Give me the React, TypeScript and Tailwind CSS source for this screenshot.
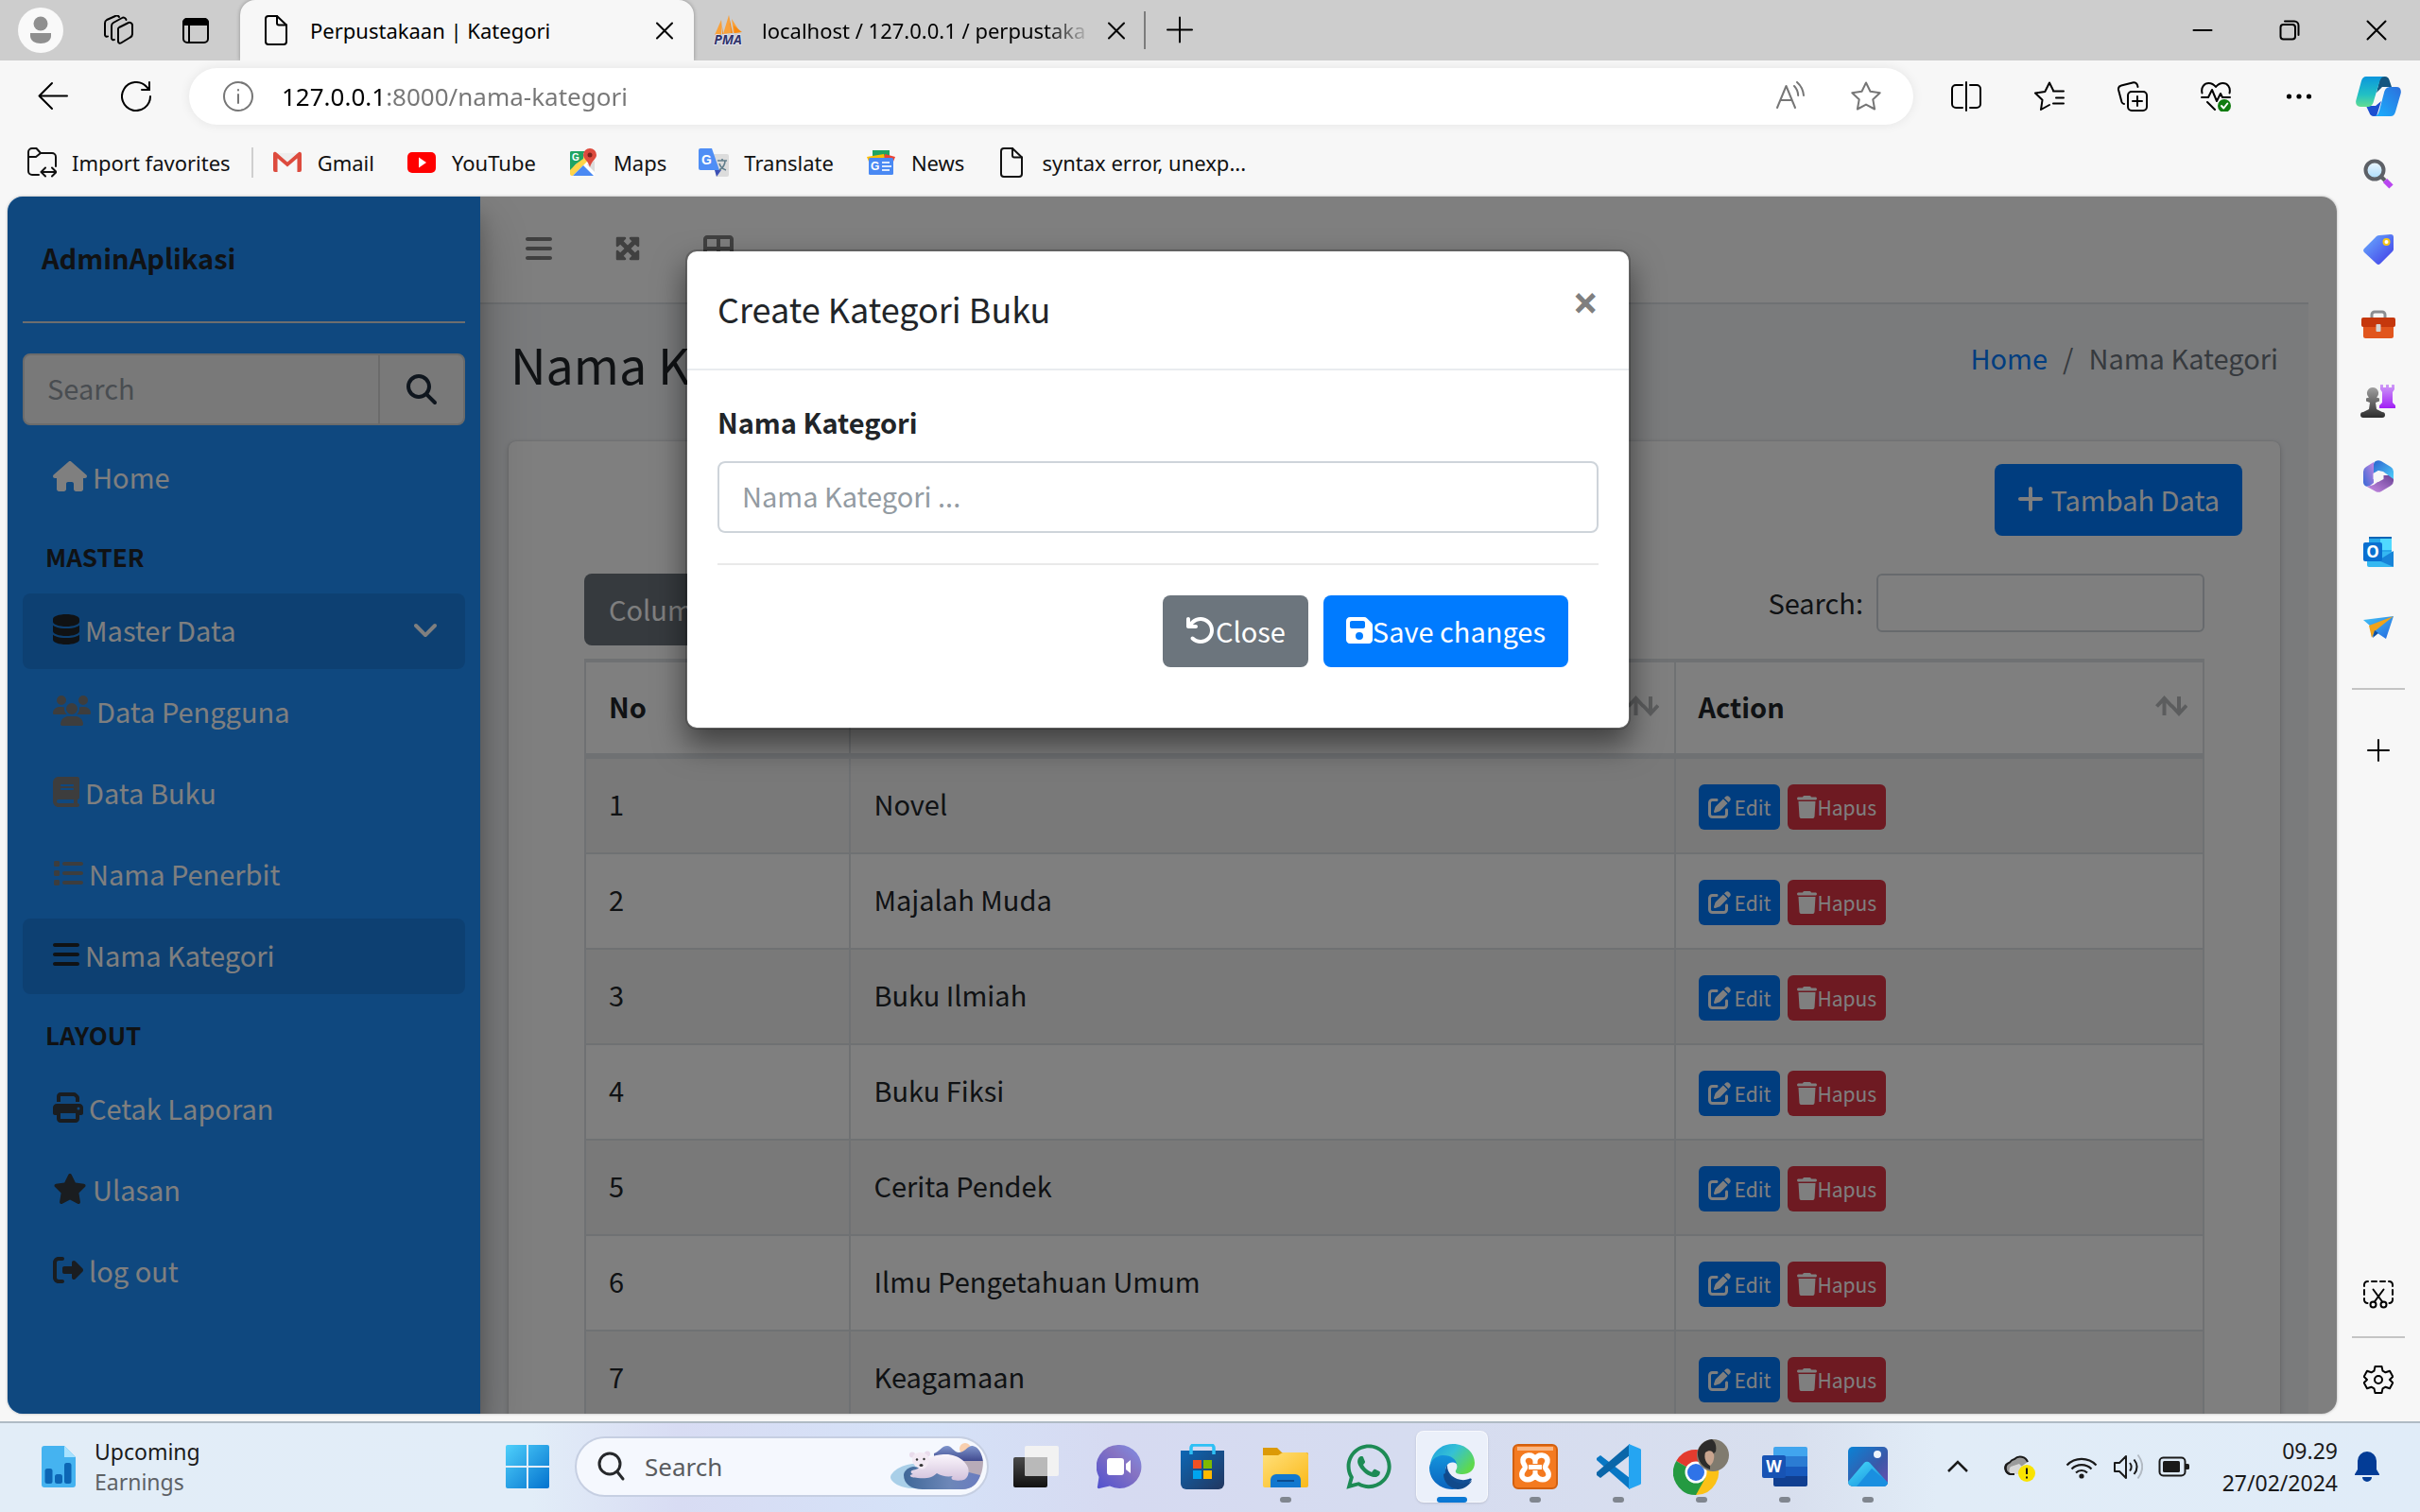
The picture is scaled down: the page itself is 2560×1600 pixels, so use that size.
import type { ReactNode } from "react";
import {
  FaHouse, FaDatabase, FaUsers, FaBook, FaList, FaBars, FaPrint, FaStar, FaRightFromBracket,
  FaAngleDown, FaMaximize, FaTableCellsLarge, FaPenToSquare, FaTrash, FaArrowRotateLeft,
  FaFloppyDisk, FaPlus, FaMagnifyingGlass, FaWhatsapp,
} from "react-icons/fa6";

type P = { children?: ReactNode };

/* ---------- line icons of the browser chrome (32 x 32 grid) ---------- */

function Line({ children }: P) {
  return (
    <svg viewBox="0 0 32 32" className="size-8 shrink-0" fill="none" stroke="currentColor" strokeWidth="2" strokeLinecap="round" strokeLinejoin="round" aria-hidden="true">
      {children}
    </svg>
  );
}

const FileIcon = () => (
  <Line>
    <path d="M8 1h9l10 9.500v17.500a3 3 0 0 1-3 3H8a3 3 0 0 1-3-3V4a3 3 0 0 1 3-3z" />
    <path d="M17 1v7.500a2 2 0 0 0 2 2h8" />
  </Line>
);
const CrossIcon = () => (
  <Line><path d="M8 8.500l16 16M24 8.500l-16 16" /></Line>
);
const WorkspacesIcon = () => (
  <Line>
    <path d="M17 13l9-4.500a3 3 0 0 1 5 2.500v9a4 4 0 0 1-2.200 3.500L19 29.500a2 2 0 0 1-3-2V15a2 2 0 0 1 1-2z" />
    <path d="M12 26a2 2 0 0 1-3-2V11.500a4 4 0 0 1 2-3.500l9-5a3 3 0 0 1 4.500 2" />
    <path d="M5 22.500a2 2 0 0 1-3-2V8.500A4 4 0 0 1 4 5l9-4a3 3 0 0 1 4 1" />
  </Line>
);
const VerticalTabsIcon = () => (
  <Line>
    <rect x="3" y="4" width="26" height="25" rx="4" />
    <path d="M3 10V8a4 4 0 0 1 4-4h18a4 4 0 0 1 4 4v2z" fill="currentColor" />
    <path d="M9 10v19" />
  </Line>
);
const BackIcon = () => (
  <Line><path d="M31 15.500H1.500M15 2L1.500 15.500L15 29" /></Line>
);
const RefreshIcon = () => (
  <Line>
    <path d="M31 16a15 15 0 1 1-4-10.200L30 9" />
    <path d="M30 1v8h-8" />
  </Line>
);
const InfoIcon = () => (
  <Line>
    <circle cx="16" cy="16" r="15" />
    <path d="M16 14v9M16 9v.500" />
  </Line>
);
const ReadAloudIcon = () => (
  <Line>
    <path d="M2 28L11.500 5L21 28M5.500 20h12" />
    <path d="M20 5c2.500 2.500 4 6 4.200 10M23 1c4 3.500 6.500 8.500 7 14" />
  </Line>
);
const StarIcon = () => (
  <Line>
    <path d="M16 1.500l4.500 9.300 10.200 1.400-7.400 7.100 1.800 10.200L16 24.600l-9.100 4.900 1.800-10.200-7.400-7.100 10.200-1.400z" />
  </Line>
);
const SplitIcon = () => (
  <Line>
    <path d="M12 4H5a4 4 0 0 0-4 4v16a4 4 0 0 0 4 4h7M20 4h7a4 4 0 0 1 4 4v16a4 4 0 0 1-4 4h-7M16 1v30" />
  </Line>
);
const FavoritesIcon = () => (
  <Line>
    <path d="M16 25l-9 5 1.500-10.200L1 12.500l10.300-1.500L16 1.500l4.200 8.500M20 10.500h11M23 17.500h8M20 23.500h11" />
  </Line>
);
const CollectionsIcon = () => (
  <Line>
    <rect x="11" y="11" width="20" height="20" rx="4" />
    <path d="M21 16v10M16 21h10M7 24a3 3 0 0 1-2.500-2L1 9a4 4 0 0 1 3-4.500L17 1.200a4 4 0 0 1 4 2.800l.500 2" />
  </Line>
);
const HealthIcon = () => (
  <Line>
    <path d="M1.500 12.500C0 6 4 2 8.500 2c3 0 5.500 1.500 7.500 4 2-2.500 4.500-4 7.500-4 4.500 0 8.500 4 7 10.500M1 17h7l4-8 5 12 4-8 2 4h8M7 22l8 8" />
    <circle cx="25" cy="26" r="7" fill="#107c10" stroke="none" />
    <path d="M22 26l2.300 2.500 4-5" stroke="#fff" />
  </Line>
);
const DotsIcon = () => (
  <Line>
    <g fill="currentColor" stroke="none"><circle cx="5.500" cy="16" r="2.600" /><circle cx="16" cy="16" r="2.600" /><circle cx="26.500" cy="16" r="2.600" /></g>
  </Line>
);
const ImportIcon = () => (
  <Line>
    <path d="M13 29H6a4 4 0 0 1-4-4V5a4 4 0 0 1 4-4h4.500L15 6h12a4 4 0 0 1 4 4v10M2 10h8l5-4" />
    <path d="M16 26h15M20 21.500L15.500 26l4.500 4.500M27 21.500l4.500 4.500-4.500 4.500" />
  </Line>
);
const MinimizeIcon = () => <Line><path d="M6.500 16h19" /></Line>;
const RestoreIcon = () => (
  <Line>
    <rect x="6.500" y="10" width="15.500" height="15.500" rx="3" />
    <path d="M11 6.500h10a4.500 4.500 0 0 1 4.500 4.500v10" />
  </Line>
);
const WindowCloseIcon = () => <Line><path d="M6.500 6.500l19 19M25.500 6.500l-19 19" /></Line>;
const PlusIcon = () => <Line><path d="M16 2.500v26M3 15.500h26" /></Line>;
const ThinPlusIcon = () => <Line><path d="M16 5v22M5 16h22" /></Line>;
const ScreenshotIcon = () => (
  <Line>
    <path d="M5 2H4.500A3.500 3.500 0 0 0 1 5.500V7M1 11v5M1 20v1.500A3.500 3.500 0 0 0 4.500 25M9 2h5M18 2h5M27 2h.500A3.500 3.500 0 0 1 31 5.500V7M31 11v5M31 20v1.500a3.500 3.500 0 0 1-3.500 3.500" />
    <path d="M10.500 10.500L20.500 24M21.500 10.500L11.500 24" />
    <circle cx="10.500" cy="26.500" r="3" /><circle cx="21.500" cy="26.500" r="3" />
  </Line>
);
const GearIcon = () => (
  <Line>
    <path d="M12.500 2h7l1 4.600 3 1.700 4.500-1.500 3.300 6-3.400 3.200 3.400 3.200-3.300 6-4.500-1.500-3 1.700-1 4.600h-7l-1-4.600-3-1.700L4 25.200l-3.300-6L4 16 .700 12.800l3.300-6 4.500 1.500 3-1.700z" />
    <circle cx="16" cy="16" r="4" />
  </Line>
);

/* ---------- coloured site and app icons ---------- */

function Art({ children, box = "0 0 32 32", size = "size-8" }: P & { box?: string; size?: string }) {
  return <svg viewBox={box} className={`${size} shrink-0 overflow-visible`} aria-hidden="true">{children}</svg>;
}

const PmaIcon = () => (
  <Art>
    <path d="M9 5L2 21h7zM17 0l-6 20 8-1zM20 4l9 14-7 1z" fill="#f9a13a" />
    <path d="M17 0l2 19 2 0zM22 11l9 7-8 1zM9 5l1 15 1 0z" fill="#f78a12" />
    <text x="16" y="31" textAnchor="middle" fontFamily="Open Sans" fontSize="14" fontWeight="700" fontStyle="italic" fill="#32356b" stroke="#e8e8f4" strokeWidth="1.500" paintOrder="stroke">PMA</text>
  </Art>
);
const GmailIcon = () => (
  <Art>
    <path d="M2 6h28v20H2z" fill="#eee" />
    <path d="M6 26V11l10 9 10-9v15z" fill="#f7f7f7" />
    <path d="M1 6.500A2 2 0 0 1 4.500 5.500L16 15.500 27.500 5.500A2 2 0 0 1 31 7v17a2 2 0 0 1-2 2h-2.500V11.500L16 20.500 5.500 11.500V26H3a2 2 0 0 1-2-2z" fill="#dd4b3e" />
  </Art>
);
const YoutubeIcon = () => (
  <Art><rect x="1" y="5" width="30" height="22" rx="5" fill="#f00" /><path d="M13 10.500v11l8-5.500z" fill="#fff" /></Art>
);
const MapsIcon = () => (
  <Art>
    <rect x="2" y="4" width="26" height="26" rx="2" fill="#fff" />
    <path d="M2 6a2 2 0 0 1 2-2h14L2 26z" fill="#1fa463" />
    <path d="M2 24L20 6l3 6L5 30H4a2 2 0 0 1-2-2z" fill="#ffd44a" />
    <path d="M2 6a2 2 0 0 1 2-2h12v8L2 22z" fill="#1fa463" />
    <path d="M5 30l11-11 11 11z" fill="#4a89f3" />
    <path d="M28 14v12l-8-8z" fill="#dcdcdc" />
    <text x="4" y="14" fontFamily="Liberation Sans" fontSize="10" fontWeight="700" fill="#fff">G</text>
    <path d="M23 1a7 7 0 0 1 7 7c0 4-5 6-7 13-2-7-7-9-7-13a7 7 0 0 1 7-7z" fill="#dd4b3e" /><circle cx="23" cy="8" r="2.500" fill="#7a231c" />
  </Art>
);
const TranslateIcon = () => (
  <Art>
    <path d="M13 7h17a2 2 0 0 1 2 2v20a2 2 0 0 1-2 2H19z" fill="#dcdcdc" />
    <path d="M17 24h7l-5 7z" fill="#3b50b5" />
    <path d="M2 1h12l8 23H2a2 2 0 0 1-2-2V3a2 2 0 0 1 2-2z" fill="#4f8ef5" />
    <text x="3" y="18" fontFamily="Liberation Sans" fontSize="14" fontWeight="700" fill="#fff">G</text>
    <path d="M20 14h10M25 12v2M22 17c1 4 4 6 7 7M28 14c0 4-3 8-6 10" stroke="#607d8b" strokeWidth="1.600" fill="none" />
  </Art>
);
const NewsIcon = () => (
  <Art>
    <path d="M7 3h18v10H7z" fill="#1fa463" />
    <path d="M1 10l18-3 2 8H3z" fill="#fdbd00" /><path d="M31 10L20 7l-1 8h10z" fill="#ec4335" />
    <rect x="3" y="11" width="26" height="18" rx="1.500" fill="#4a89f3" />
    <text x="5" y="24" fontFamily="Liberation Sans" fontSize="12" fontWeight="700" fill="#fff">G</text>
    <path d="M17 16h8M17 20h10M17 24h8" stroke="#dbe8ff" strokeWidth="2" />
  </Art>
);
const CopilotIcon = () => (
  <svg viewBox="0 0 48 44" className="h-11 w-12" aria-hidden="true">
    <defs>
      <linearGradient id="cpA" x1="0" y1="0" x2="0" y2="1"><stop offset="0" stopColor="#0b96dd" /><stop offset=".6" stopColor="#22c0c4" /><stop offset="1" stopColor="#62dd92" /></linearGradient>
      <linearGradient id="cpB" x1="1" y1="0" x2="0" y2="1"><stop offset="0" stopColor="#2c6fdc" /><stop offset="1" stopColor="#1bb2ff" /></linearGradient>
    </defs>
    <path d="M26 1h5a5 5 0 0 1 4.500 3.500L38 12H28l-6 6z" fill="#14557f" />
    <path d="M22 43h-3a5 5 0 0 1-4.500-3.500L11 32h10l6-5z" fill="#1d4fd0" />
    <path d="M11 1h20c-4 0-5 3-6 6l-6 20c-1 4-3 6-7 6H5c-4 0-5.500-3-4.600-7L6 5.500C7 2.500 8.500 1 11 1z" fill="url(#cpA)" />
    <path d="M37 43H19c4 0 5-3 6-6l5-19c1-4 3-6 7-6h6c4 0 5.500 3 4.600 7L42 38.500c-1 3-2.500 4.500-5 4.500z" fill="url(#cpB)" />
  </svg>
);
const LensIcon = () => (
  <Art>
    <defs><linearGradient id="ln" x1="0" y1="0" x2="0" y2="1"><stop offset="0" stopColor="#eef7ff" /><stop offset="1" stopColor="#a9dbfb" /></linearGradient></defs>
    <circle cx="12" cy="12" r="9.500" fill="url(#ln)" stroke="#5d6066" strokeWidth="4" />
    <path d="M19 19l4 4" stroke="#5d6066" strokeWidth="4" /><path d="M23 23l6.500 6.500" stroke="#b946f0" strokeWidth="6" />
  </Art>
);
const TagIcon = () => (
  <Art>
    <defs><linearGradient id="tg" x1="0" y1="0" x2="1" y2="1"><stop offset="0" stopColor="#6bb1ff" /><stop offset="1" stopColor="#4038e6" /></linearGradient></defs>
    <path d="M17 1l12-1a3 3 0 0 1 3 3v12a4 4 0 0 1-1 3L18 31a3 3 0 0 1-4 0L1 19a3 3 0 0 1 0-4L14 2a5 5 0 0 1 3-1z" fill="url(#tg)" />
    <circle cx="24.500" cy="8" r="3" fill="#fff" stroke="#f7c717" strokeWidth="2" />
  </Art>
);
const BriefcaseIcon = () => (
  <Art box="0 0 36 32" size="h-8 w-9">
    <path d="M11 10V5a3 3 0 0 1 3-3h8a3 3 0 0 1 3 3v5" fill="none" stroke="#8b8d91" strokeWidth="3" />
    <rect x="2" y="16" width="32" height="14" rx="2.500" fill="#e1551d" />
    <rect x="0" y="8" width="36" height="10" rx="2" fill="#c5370c" /><rect x="15.500" y="15" width="5" height="8" rx="1" fill="#d4d4d4" />
  </Art>
);
const ChessIcon = () => (
  <Art box="0 0 36 36" size="size-9">
    <defs>
      <linearGradient id="chA" x1="0" y1="0" x2="0" y2="1"><stop offset="0" stopColor="#a0a0a0" /><stop offset="1" stopColor="#2d2d2d" /></linearGradient>
      <linearGradient id="chB" x1="0" y1="0" x2="0" y2="1"><stop offset="0" stopColor="#cf9cf7" /><stop offset="1" stopColor="#a01ff5" /></linearGradient>
    </defs>
    <path d="M20 1h3v3h3V1h3v3h3V1h3v5l-2 3v11l3 3v3H19v-3l3-3V9l-2-3z" fill="url(#chB)" />
    <path d="M12 4a6 6 0 0 1 4 10.500l3 1v3l-4 1.500 1 7 6 3a3 3 0 0 1 0 6H2a3 3 0 0 1 0-6l6-3 1-7-4-1.500v-3l3-1A6 6 0 0 1 12 4z" fill="url(#chA)" />
  </Art>
);
const M365Icon = () => (
  <Art box="0 0 32 34" size="h-[34px] w-8">
    <defs>
      <linearGradient id="mA" x1="0" y1="0" x2="1" y2="1"><stop offset="0" stopColor="#2b62cf" /><stop offset="1" stopColor="#4fd0fb" /></linearGradient>
      <linearGradient id="mB" x1="1" y1="0" x2="0" y2="1"><stop offset="0" stopColor="#c386e0" /><stop offset="1" stopColor="#3668d6" /></linearGradient>
      <linearGradient id="mC" x1="0" y1="1" x2="1" y2="0"><stop offset="0" stopColor="#c88ce6" /><stop offset="1" stopColor="#6a4295" /></linearGradient>
    </defs>
    <path d="M11 2L3 7a6 6 0 0 0-3 5v11c0 4 4 6 7 4l4-3z" fill="url(#mB)" />
    <path d="M4 28l7-2 10-7V16l11 0v6a6 6 0 0 1-3 5l-10 6a6 6 0 0 1-6 0z" fill="url(#mC)" />
    <path d="M13 1a6 6 0 0 1 6 0l10 6a6 6 0 0 1 3 5v8l-11-8-5-1-5 3V4a4 4 0 0 1 2-3z" fill="url(#mA)" />
    <path d="M16 11l5.500 3v6L16 23l-5.500-3v-6z" fill="#f7f7f7" />
  </Art>
);
const OutlookIcon = () => (
  <Art>
    <path d="M6 2a2 2 0 0 1 2-2h20a2 2 0 0 1 2 2v14H6z" fill="#28a8ea" /><path d="M18 2h12v12H18z" fill="#50d9ff" /><path d="M6 0h24v2H6z" fill="#0f64b5" />
    <path d="M4 16h28v14a2 2 0 0 1-2 2H6a2 2 0 0 1-2-2z" fill="#35b8f1" /><path d="M32 15L16 25l16 7z" fill="#1784d8" />
    <rect x="0" y="6" width="20" height="20" rx="2" fill="#0a6fd0" />
    <text x="10" y="22" textAnchor="middle" fontFamily="Open Sans" fontSize="17" fontWeight="700" fill="#fff">O</text>
  </Art>
);
const PlaneIcon = () => (
  <Art>
    <defs><linearGradient id="pl" x1="0" y1="0" x2="1" y2="1"><stop offset="0" stopColor="#45c4f5" /><stop offset="1" stopColor="#2468e0" /></linearGradient></defs>
    <path d="M0 8L32 4 24 28 15 22 9 26 7 14z" fill="url(#pl)" /><path d="M6 14L32 4 12 20l-3 7z" fill="#f0a31b" />
    <path d="M10 27l2-8 4 3z" fill="#0f4fa0" />
  </Art>
);

/* ---------- browser ---------- */

function TabStrip() {
  return (
    <header className="flex h-16 shrink-0 items-center bg-[#cdcdcd] pl-0.5 text-black">
      <button aria-label="Profile" className="flex w-[82px] justify-center">
        <svg viewBox="0 0 48 48" className="size-12" aria-hidden="true">
          <circle cx="24" cy="24" r="24" fill="#f9f9f9" />
          <circle cx="24" cy="17" r="7.500" fill="#8f8f8f" /><path d="M13 27h22v3c0 5-5 8-11 8s-11-3-11-8z" fill="#8f8f8f" />
        </svg>
      </button>
      <button aria-label="Workspaces" className="flex w-[82px] justify-center"><WorkspacesIcon /></button>
      <button aria-label="Tab actions" className="flex w-[82px] justify-center"><VerticalTabsIcon /></button>
      <div className="ml-1.5 flex h-16 w-[480px] items-center gap-5 rounded-t-2xl bg-[#f7f7f7] pl-[22px] pr-[15px] shadow-[0_0_4px_rgba(0,0,0,0.3)]">
        <FileIcon />
        <button className="flex-1 truncate text-left text-[22px] leading-8">Perpustakaan | Kategori</button>
        <button aria-label="Close tab" className="flex w-8 justify-center"><CrossIcon /></button>
      </div>
      <div className="flex h-16 w-[476px] items-center gap-5 pl-5 pr-[13px]">
        <PmaIcon />
        <button className="-mr-2.5 flex-1 whitespace-nowrap text-left text-[22px] leading-8 [mask-image:linear-gradient(90deg,#000_86%,transparent)]">localhost / 127.0.0.1 / perpustaka</button>
        <button aria-label="Close tab" className="flex w-8 justify-center"><CrossIcon /></button>
      </div>
      <div className="h-10 w-0.5 bg-[#7c7c7c]" />
      <button aria-label="New tab" className="ml-5"><PlusIcon /></button>
      <div className="ml-auto flex">
        <button aria-label="Minimize" className="flex w-[92px] justify-center"><MinimizeIcon /></button>
        <button aria-label="Restore" className="flex w-[92px] justify-center"><RestoreIcon /></button>
        <button aria-label="Close window" className="flex w-[92px] justify-center"><WindowCloseIcon /></button>
      </div>
    </header>
  );
}

function Toolbar() {
  return (
    <div className="flex h-[76px] shrink-0 items-center bg-[#f7f7f7] pl-10 text-black">
      <button aria-label="Back"><BackIcon /></button>
      <button aria-label="Refresh" className="ml-14"><RefreshIcon /></button>
      <div className="ml-10 mr-3 flex h-[60px] flex-1 items-center rounded-full bg-white pl-9 pr-2.5 text-[#767676] shadow-[0_0_12px_rgba(0,0,0,0.08)]">
        <InfoIcon />
        <input aria-label="Address" readOnly value="127.0.0.1:8000/nama-kategori" className="ml-[30px] flex-1 bg-[linear-gradient(90deg,#000_108px,#767676_108px)] bg-clip-text text-[26px] leading-10 text-transparent outline-none" />
        <button aria-label="Read aloud" className="flex w-20 justify-center"><ReadAloudIcon /></button>
        <button aria-label="Add to favorites" className="flex w-20 justify-center"><StarIcon /></button>
      </div>
      <button aria-label="Split screen" className="flex w-[88px] justify-center"><SplitIcon /></button>
      <button aria-label="Favorites" className="flex w-[88px] justify-center"><FavoritesIcon /></button>
      <button aria-label="Collections" className="flex w-[88px] justify-center"><CollectionsIcon /></button>
      <button aria-label="Browser essentials" className="flex w-[88px] justify-center"><HealthIcon /></button>
      <button aria-label="Settings and more" className="flex w-[88px] justify-center"><DotsIcon /></button>
      <button aria-label="Copilot" className="flex w-[84px] justify-center pr-1"><CopilotIcon /></button>
    </div>
  );
}

function Bookmark({ icon, label }: { icon: ReactNode; label: string }) {
  return (
    <a href="#" className="flex items-center gap-4 whitespace-nowrap">
      {icon}
      {label}
    </a>
  );
}

function Bookmarks() {
  return (
    <nav aria-label="Favorites bar" className="flex h-[68px] shrink-0 items-center pb-1 pl-7 text-[22px] leading-8 text-[#111]">
      <Bookmark icon={<ImportIcon />} label="Import favorites" />
      <div className="ml-[22px] mr-5 h-8 w-0.5 bg-[#cfcfcf]" />
      <div className="flex gap-[34px]">
        <Bookmark icon={<GmailIcon />} label="Gmail" />
        <Bookmark icon={<YoutubeIcon />} label="YouTube" />
        <Bookmark icon={<MapsIcon />} label="Maps" />
        <Bookmark icon={<TranslateIcon />} label="Translate" />
        <Bookmark icon={<NewsIcon />} label="News" />
        <Bookmark icon={<FileIcon />} label="syntax error, unexp..." />
      </div>
    </nav>
  );
}

function EdgeSidebar() {
  const apps: [string, ReactNode][] = [
    ["Search", <LensIcon />], ["Shopping", <TagIcon />], ["Tools", <BriefcaseIcon />], ["Games", <ChessIcon />],
    ["Microsoft 365", <M365Icon />], ["Outlook", <OutlookIcon />], ["Drop", <PlaneIcon />],
  ];
  return (
    <aside className="flex w-[88px] shrink-0 flex-col items-center pt-1 text-black">
      {apps.map(([name, icon]) => (
        <button key={name} aria-label={name} className="flex h-20 w-full items-center justify-center">{icon}</button>
      ))}
      <div className="my-6 h-0.5 w-14 bg-[#c4c4c4]" />
      <button aria-label="Customize" className="flex h-20 w-full items-center justify-center"><ThinPlusIcon /></button>
      <button aria-label="Screenshot" className="mt-auto flex h-20 w-full items-center justify-center"><ScreenshotIcon /></button>
      <div className="my-1 h-0.5 w-14 bg-[#c4c4c4]" />
      <button aria-label="Settings" className="mb-1 flex h-20 w-full items-center justify-center"><GearIcon /></button>
    </aside>
  );
}

/* ---------- admin page ---------- */

function NavItem({ icon, label, active, arrow }: { icon: ReactNode; label: string; active?: boolean; arrow?: boolean }) {
  return (
    <li className="mb-1.5">
      <a href="#" className={`flex h-20 items-center gap-1.5 rounded-lg px-8 pb-1 text-white ${active ? "bg-black/10" : ""}`}>
        {icon}
        <span>{label}</span>
        {arrow && <FaAngleDown className="-mr-1.5 ml-auto size-8" />}
      </a>
    </li>
  );
}

function NavHeader({ children }: P) {
  return <li className="flex h-[76px] items-center px-6 pb-0.5 text-[26px] font-bold text-[#212529]">{children}</li>;
}

function SideNav() {
  return (
    <aside className="z-10 w-[500px] shrink-0 bg-[#1e90ff] px-4 shadow-[0_28px_56px_rgba(0,0,0,0.25),0_20px_20px_rgba(0,0,0,0.22)]">
      <div className="flex h-[134px] items-center border-b-2 border-[#dcdcdc] px-5 pb-1 font-bold text-[#212529]">AdminAplikasi</div>
      <form className="mt-8 flex h-[76px] overflow-hidden rounded-lg border-2 border-[#d6d6d6] bg-[#f2f2f2]">
        <input aria-label="Search" placeholder="Search" className="min-w-0 flex-1 pb-1 pl-6 outline-none placeholder:text-[#939ba2]" />
        <button type="button" aria-label="Search" className="flex w-[90px] items-center justify-center border-l-2 border-[#d6d6d6] text-[#1f2d3d]"><FaMagnifyingGlass className="size-8" /></button>
      </form>
      <ul className="mt-4">
        <NavItem icon={<FaHouse className="h-8 w-9" />} label="Home" />
        <NavHeader>MASTER</NavHeader>
        <NavItem active arrow icon={<FaDatabase className="h-8 w-7 text-[#212529]" />} label="Master Data" />
        <NavItem icon={<FaUsers className="h-8 w-10 text-[#7b7b7b]" />} label="Data Pengguna" />
        <NavItem icon={<FaBook className="h-8 w-7 text-[#7b7b7b]" />} label="Data Buku" />
        <NavItem icon={<FaList className="size-8 text-[#7b7b7b]" />} label="Nama Penerbit" />
        <NavItem active icon={<FaBars className="h-8 w-7 text-[#212529]" />} label="Nama Kategori" />
        <NavHeader>LAYOUT</NavHeader>
        <NavItem icon={<FaPrint className="size-8 text-[#343a40]" />} label="Cetak Laporan" />
        <NavItem icon={<FaStar className="h-8 w-9 text-[#343a40]" />} label="Ulasan" />
        <NavItem icon={<FaRightFromBracket className="size-8 text-[#343a40]" />} label="log out" />
      </ul>
    </aside>
  );
}

function SortIcon() {
  return (
    <svg viewBox="0 0 34 22" className="h-[22px] w-[34px] shrink-0" fill="none" stroke="#b9bbbd" strokeWidth="4" aria-hidden="true">
      <path d="M9.500 21V3M1.500 11.500l8-8.500 8 8.500M25 1v18M17 10.500l8 8.500 8-8.500" />
    </svg>
  );
}

const categories = ["Novel", "Majalah Muda", "Buku Ilmiah", "Buku Fiksi", "Cerita Pendek", "Ilmu Pengetahuan Umum", "Keagamaan"];

function CategoryTable() {
  const head = "h-[102px] border-b-4 border-t-2 border-[#dee2e6] pb-1 pl-6 pr-4 text-left font-bold";
  const cell = "h-[101px] border-t-2 border-[#dee2e6] px-6 pb-1.5";
  return (
    <table className="mt-3.5 w-full table-fixed border-separate border-spacing-0 border-2 border-[#dee2e6]">
      <colgroup><col className="w-[16.4%]" /><col className="w-[51%]" /><col /></colgroup>
      <thead>
        <tr>
          <th className={`${head} border-r-2`}><div className="flex items-center justify-between">No<SortIcon /></div></th>
          <th className={`${head} border-r-2`}><div className="flex items-center justify-between">Nama Kategori<SortIcon /></div></th>
          <th className={head}><div className="flex items-center justify-between">Action<SortIcon /></div></th>
        </tr>
      </thead>
      <tbody>
        {categories.map((name, i) => (
          <tr key={name} className={i % 2 === 0 ? "bg-black/5" : ""}>
            <td className={`${cell} border-r-2`}>{i + 1}</td>
            <td className={`${cell} border-r-2`}>{name}</td>
            <td className={cell}>
              <div className="flex gap-2 pt-2 text-[21px] leading-8 text-white">
                <button className="flex h-12 items-center gap-1 rounded-md bg-[#007bff] px-2.5"><FaPenToSquare className="size-6" />Edit</button>
                <button className="flex h-12 items-center rounded-md bg-[#dc3545] px-2.5"><FaTrash className="h-6 w-[21px]" />Hapus</button>
              </div>
            </td>
          </tr>
        ))}
      </tbody>
    </table>
  );
}

function MainPanel() {
  return (
    <main className="mr-[30px] min-w-0 flex-1 bg-[#f4f6f9]">
      <div className="flex h-[114px] items-center border-b-2 border-[#dee2e6] bg-white pl-12 text-[#808080] shadow-[30px_0_0_#fff]">
        <button aria-label="Toggle menu" className="flex w-[94px] pb-0.5"><FaBars className="h-8 w-7" /></button>
        <button aria-label="Fullscreen" className="flex w-[94px] pb-0.5"><FaMaximize className="h-8 w-7" /></button>
        <button aria-label="Apps" className="flex pb-0.5"><FaTableCellsLarge className="size-8" /></button>
      </div>
      <div className="flex h-[145px] items-center justify-between px-8 pb-5">
        <h1 className="text-[52px] leading-[64px]">Nama Kategori</h1>
        <nav aria-label="Breadcrumb" className="flex gap-4 pb-3.5">
          <a href="#" className="text-[#007bff]">Home</a>
          <span className="text-[#6c757d]">/</span>
          <span className="text-[#6c757d]">Nama Kategori</span>
        </nav>
      </div>
      <section className="mx-[30px] rounded-lg bg-white pb-10 pt-6 shadow-[0_0_2px_rgba(0,0,0,0.13),0_2px_6px_rgba(0,0,0,0.2)]">
        <div className="flex justify-end pr-10">
          <button className="flex h-[76px] items-center gap-2 rounded-lg bg-[#007bff] px-6 pb-0.5 text-white"><FaPlus className="h-8 w-7" />Tambah Data</button>
        </div>
        <div className="mt-10 px-20">
          <div className="flex items-start justify-between">
            <button className="h-[76px] rounded-lg bg-[#6c757d] px-[26px] pb-0.5 text-white">Column visibility</button>
            <label className="flex items-center gap-3.5">
              <span className="pb-0.5">Search:</span>
              <input className="h-[62px] w-[347px] rounded-md border-2 border-[#ced4da] bg-white px-4 outline-none" />
            </label>
          </div>
          <CategoryTable />
        </div>
      </section>
    </main>
  );
}

function CreateDialog() {
  return (
    <div className="absolute inset-0 z-20 flex items-start justify-center bg-black/50 pr-[30px] pt-14">
      <div role="dialog" aria-labelledby="dialog-title" className="w-[1000px] rounded-xl border-2 border-black/20 bg-white bg-clip-padding shadow-[0_16px_32px_rgba(0,0,0,0.5)]">
        <div className="flex h-[126px] items-center justify-between border-b-2 border-[#e9ecef] px-8 pb-1">
          <h2 id="dialog-title" className="text-[36px] leading-[54px]">Create Kategori Buku</h2>
          <button aria-label="Close" className="pb-3 font-['Noto_Sans',sans-serif] text-[48px] font-bold leading-12 text-[#7f7f7f]">×</button>
        </div>
        <form className="px-8 pb-16 pt-[30px]">
          <label htmlFor="nama" className="block font-bold leading-[48px]">Nama Kategori</label>
          <input id="nama" placeholder="Nama Kategori ..." className="mt-[18px] h-[76px] w-full rounded-lg border-2 border-[#ced4da] px-6 pb-1 outline-none placeholder:text-[#939ba2]" />
          <hr className="my-8 border-t-2 border-[#e9e9e9]" />
          <div className="flex justify-end gap-4 pr-8 text-white">
            <button type="button" className="flex h-[76px] items-center rounded-lg bg-[#6c757d] px-6 pb-0.5"><FaArrowRotateLeft className="size-8" />Close</button>
            <button type="button" className="flex h-[76px] items-center rounded-lg bg-[#007bff] px-6 pb-0.5"><FaFloppyDisk className="h-8 w-7" />Save changes</button>
          </div>
        </form>
      </div>
    </div>
  );
}

function Page() {
  return (
    <div className="relative mb-2 ml-2 flex min-h-0 flex-1 overflow-hidden rounded-2xl bg-white font-['Noto_Sans_CJK_SC',sans-serif] text-[29px] leading-[48px] text-[#212529] shadow-[0_0_3px_rgba(0,0,0,0.3)]">
      <SideNav />
      <MainPanel />
      <CreateDialog />
    </div>
  );
}

/* ---------- taskbar ---------- */

const EarningsIcon = () => (
  <svg viewBox="0 0 36 44" className="h-11 w-9" aria-hidden="true">
    <path d="M3 0h21l12 12v29a3 3 0 0 1-3 3H3a3 3 0 0 1-3-3V3a3 3 0 0 1 3-3z" fill="#45b3f0" /><path d="M24 0l12 12H24z" fill="#a8e2ff" />
    <rect x="3.500" y="24" width="8" height="16" rx="2.500" fill="#0c66b5" /><rect x="14" y="30" width="8" height="10" rx="2.500" fill="#0c66b5" /><rect x="24" y="18" width="7.500" height="22" rx="2.500" fill="#0c66b5" />
  </svg>
);
const WindowsIcon = () => (
  <svg viewBox="0 0 46 46" className="size-[46px]" aria-hidden="true">
    <defs><linearGradient id="wn" x1="0" y1="0" x2="1" y2="1" gradientUnits="objectBoundingBox"><stop offset="0" stopColor="#4fd0fb" /><stop offset="1" stopColor="#0372ce" /></linearGradient></defs>
    <path d="M2 0h20v22H0V2a2 2 0 0 1 2-2zM24 0h20a2 2 0 0 1 2 2v20H24zM0 24h22v22H2a2 2 0 0 1-2-2zM24 24h22v20a2 2 0 0 1-2 2H24z" fill="url(#wn)" />
  </svg>
);
const BearArt = () => (
  <svg viewBox="0 0 98 50" className="h-[50px] w-[98px]" aria-hidden="true">
    <defs>
      <linearGradient id="br" x1="0" y1="0" x2="0" y2="1"><stop offset="0" stopColor="#fbf6fc" /><stop offset="1" stopColor="#d3c2dc" /></linearGradient>
      <linearGradient id="bm" x1="0" y1="0" x2="0" y2="1"><stop offset="0" stopColor="#7f95cc" /><stop offset="1" stopColor="#3d468c" /></linearGradient>
      <linearGradient id="bw" x1="0" y1="0" x2="1" y2="0"><stop offset="0" stopColor="#3f6798" /><stop offset=".6" stopColor="#6d87b8" /><stop offset="1" stopColor="#6a7cc0" /></linearGradient>
    </defs>
    <circle cx="79" cy="6" r="6" fill="#f9cfae" />
    <path d="M46 20V11c5-1 8-8 14-8 5 0 6 6 12 7 7 0 10-8 15-7 6 1 10 8 11 17z" fill="url(#bm)" />
    <path d="M70 19h28c0 16-8 30-22 30H50z" fill="#b8abb8" />
    <path d="M26 22C10 22 0 32 0 36c0 5 10 12 24 12h6z" fill="#a9cfe8" />
    <path d="M24 25c-6 1-10 5-10 9 0 9 8 15 20 15h42c9 0 16-5 19-15l-16-4z" fill="url(#bw)" />
    <path d="M32 24c2-7 12-11 24-12 13-1 23 6 26 14 2 6-1 12-5 13-3 1-6 1-11 0-2-1-2-3 0-4-6 1-12 0-17-3-5 5-12 6-20 5-5 0-9-1-8-3 1-1 3-1 3-1-3-1-3-3-1-4 4-1 8-2 9-5z" fill="url(#br)" />
    <circle cx="23" cy="12.500" r="3" fill="#e9dcec" /><circle cx="39" cy="11.500" r="3" fill="#e9dcec" />
    <path d="M23 18c0-6 4-8 9-8s9 3 9 8c0 4-3 7-5 9-2 1-5 1-7-1-3-2-6-4-6-8z" fill="#f3eaf4" />
    <circle cx="28" cy="17.500" r="1.200" fill="#333" /><circle cx="35.500" cy="17" r="1.200" fill="#333" /><ellipse cx="32.500" cy="23.500" rx="2" ry="1.500" fill="#333" />
  </svg>
);

const A = ({ children }: P) => <svg viewBox="0 0 48 48" className="size-12" aria-hidden="true">{children}</svg>;

const TaskViewArt = () => (
  <A>
    <defs><linearGradient id="tvA" x1="0" y1="0" x2="0" y2="1"><stop offset="0" stopColor="#4a4a4a" /><stop offset="1" stopColor="#111" /></linearGradient></defs>
    <rect x="0" y="14" width="36" height="32" rx="2" fill="url(#tvA)" /><rect x="12" y="2" width="36" height="32" rx="2" fill="#f2f2f2" /><path d="M12 14h24v20H14a2 2 0 0 1-2-2z" fill="#b9b9b9" />
  </A>
);
const ChatArt = () => (
  <A>
    <defs><linearGradient id="ct" x1="1" y1="0" x2="0" y2="1"><stop offset="0" stopColor="#7f90e8" /><stop offset=".4" stopColor="#8673c2" /><stop offset="1" stopColor="#4f50cf" /></linearGradient></defs>
    <path d="M24 1a23 23 0 1 1-10 43.500L3 47a1.500 1.500 0 0 1-2-2l1.500-10A23 23 0 0 1 24 1z" fill="url(#ct)" />
    <rect x="11" y="15" width="18" height="18" rx="3" fill="#fff" /><path d="M31 21l5-4v14l-5-4z" fill="#fff" />
  </A>
);
const StoreArt = () => (
  <A>
    <defs><linearGradient id="st" x1="0" y1="0" x2="1" y2="1"><stop offset="0" stopColor="#0c67b5" /><stop offset="1" stopColor="#23375f" /></linearGradient></defs>
    <path d="M1 7h46v35a6 6 0 0 1-6 6H7a6 6 0 0 1-6-6z" fill="url(#st)" />
    <path d="M12 11V4a3 3 0 0 1 3-3h18a3 3 0 0 1 3 3v7" fill="none" stroke="#2ec0f5" strokeWidth="3.500" />
    <path d="M14 17h9v9h-9z" fill="#f25022" /><path d="M25 17h9v9h-9z" fill="#7fba00" /><path d="M14 28h9v9h-9z" fill="#00a4ef" /><path d="M25 28h9v9h-9z" fill="#ffb900" />
  </A>
);
const ExplorerArt = () => (
  <A>
    <defs><linearGradient id="ex" x1="0" y1="0" x2="1" y2="1"><stop offset="0" stopColor="#ffe07a" /><stop offset="1" stopColor="#fbb91a" /></linearGradient></defs>
    <path d="M0 4h15l5 5h26a2 2 0 0 1 2 2v4H0z" fill="#dc9a06" /><path d="M0 12h16l5-3h25l2 2v33a2 2 0 0 1-2 2H2a2 2 0 0 1-2-2z" fill="url(#ex)" />
    <path d="M8 46V38a6 6 0 0 1 6-6h20a6 6 0 0 1 6 6v8z" fill="#1278cf" /><path d="M15 39h18" stroke="#0a4c90" strokeWidth="2" />
  </A>
);
const WhatsappArt = () => <FaWhatsapp className="size-[54px] text-[#1d8b55]" aria-hidden="true" />;
const EdgeArt = () => (
  <A>
    <defs>
      <linearGradient id="eA" x1="0" y1="0" x2="1" y2=".6"><stop offset="0" stopColor="#1b9de0" /><stop offset=".5" stopColor="#35c1d5" /><stop offset="1" stopColor="#5fd94c" /></linearGradient>
      <linearGradient id="eB" x1="0" y1="0" x2="0" y2="1"><stop offset="0" stopColor="#1493dc" /><stop offset="1" stopColor="#0a63bd" /></linearGradient>
    </defs>
    <path d="M1 21C3 9 12 0 25 0c14 0 23 10 23 20 0 8-6 12-13 12-6 0-8-2-7-4 2-3 2-6-1-9-6-6-19-7-26 2z" fill="url(#eA)" />
    <path d="M0 25c1-8 8-13 15-13 8 0 13 4 14 9-7-4-12 1-12 8 0 9 6 17 14 18-14 4-31-5-31-22z" fill="url(#eB)" />
    <path d="M19 22c-6 11 1 22 14 22 5 0 8-2 11-5 2-2 0-3-2-2-10 4-24-3-23-15z" fill="#124f94" />
    <path d="M15 32c0 8 6 15 15 16 7 0 13-5 15-9-9 6-22 3-26-9z" fill="#114a8b" />
  </A>
);
const XamppArt = () => (
  <A>
    <rect x="1" y="1" width="46" height="46" rx="5" fill="#f47a20" stroke="#d2600f" strokeWidth="2" /><path d="M5 3h38v4H5z" fill="#f9b784" />
    <path d="M24 16c-3-6-12-5-13 1-.6 4 2.500 5 2.500 7.500S8.500 29 10 34c2 5 10 5 13 0M24 16c3-6 12-5 13 1 .6 4-2.500 5-2.500 7.500S39.500 29 38 34c-2 5-10 5-13 0" fill="none" stroke="#fff" strokeWidth="5.500" strokeLinecap="round" strokeLinejoin="round" />
    <path d="M17 24.500h14" stroke="#fff" strokeWidth="5" /><path d="M24 14v7M24 28v7" stroke="#fff" strokeWidth="5" />
  </A>
);
const VscodeArt = () => (
  <A>
    <path d="M1 15l4-3 31 24v12L1 17z" fill="#0877c4" /><path d="M1 33l4 3 31-24V0L1 30z" fill="#0a66a9" />
    <path d="M35 0l12 5a2 2 0 0 1 1 2v34a2 2 0 0 1-1 2l-12 5z" fill="#25a5f2" />
  </A>
);
const ChromeArt = () => (
  <svg viewBox="0 0 60 60" className="h-[60px] w-[60px]" aria-hidden="true">
    <path d="M24 36L3.200 24A24 24 0 0 1 44.800 24z" fill="#e33b2e" /><path d="M24 36l20.800-12A24 24 0 0 1 24 60z" fill="#fbc116" /><path d="M24 36L3.200 24A24 24 0 0 0 24 60l10-18z" fill="#249a41" />
    <circle cx="24" cy="36" r="11.500" fill="#fff" /><circle cx="24" cy="36" r="9" fill="#2f73e8" />
    <circle cx="42" cy="18" r="17" fill="#807b6f" /><path d="M26 14c2-8 8-12 15-13 4 3 5 8 4 13l-6 6v13c-8-2-14-10-13-19z" fill="#2d2c2b" /><path d="M34 15c4-3 8-2 9 2s-1 10-4 12c-4-2-7-8-5-14z" fill="#c8a48e" />
  </svg>
);
const WordArt = () => (
  <A>
    <path d="M12 5a2 2 0 0 1 2-2h32a2 2 0 0 1 2 2v8H12z" fill="#41a5ee" /><path d="M12 13h36v11H12z" fill="#2b7cd3" /><path d="M12 24h36v10H12z" fill="#185abd" /><path d="M12 34h36v9a2 2 0 0 1-2 2H14a2 2 0 0 1-2-2z" fill="#103f91" />
    <rect x="0" y="12" width="25" height="24" rx="2" fill="#1753b4" />
    <text x="12.500" y="30" textAnchor="middle" fontFamily="Open Sans" fontSize="17" fontWeight="700" fill="#fff">W</text>
  </A>
);
const PhotosArt = () => (
  <A>
    <defs>
      <linearGradient id="ph" x1="0" y1="0" x2="1" y2="1"><stop offset="0" stopColor="#0a83d6" /><stop offset=".6" stopColor="#3b58a8" /><stop offset="1" stopColor="#6d4fb0" /></linearGradient>
      <linearGradient id="pi" x1="0" y1="0" x2="1" y2="1"><stop offset="0" stopColor="#48dcfb" /><stop offset="1" stopColor="#1287da" /></linearGradient>
    </defs>
    <rect x="3" y="3" width="42" height="42" rx="5" fill="url(#ph)" />
    <path d="M3 40L20 20a4 4 0 0 1 6 0l19 21a5 5 0 0 1-5 4H8a5 5 0 0 1-5-5z" fill="url(#pi)" /><path d="M12 45l16-19 17 15a5 5 0 0 1-5 4z" fill="#1a8fe0" />
    <circle cx="34" cy="11" r="4" fill="#eef4fb" />
  </A>
);

function Taskbar() {
  const apps: [string, ReactNode, boolean][] = [
    ["Task view", <TaskViewArt />, false], ["Chat", <ChatArt />, false], ["Store", <StoreArt />, false],
    ["Explorer", <ExplorerArt />, true], ["WhatsApp", <WhatsappArt />, false], ["Edge", <EdgeArt />, false],
    ["XAMPP", <XamppArt />, true], ["VS Code", <VscodeArt />, true], ["Chrome", <ChromeArt />, true],
    ["Word", <WordArt />, true], ["Photos", <PhotosArt />, true],
  ];
  return (
    <footer className="flex h-24 shrink-0 items-center border-t-2 border-[#b0bbc5] bg-[linear-gradient(90deg,#e2edf7_0%,#e2edf8_22%,#d8dcf3_28%,#d5e2f8_38%,#d6daf1_46%,#d6dcf0_58%,#d8dfee_74%,#e1ecf7_80%,#e0ecf8_100%)] pb-0.5 text-[#1a1a1a]">
      <button className="flex w-[518px] items-center gap-5 pl-11 text-left text-[23px] leading-8">
        <EarningsIcon />
        <span>Upcoming<br /><span className="text-[#5d6166]">Earnings</span></span>
      </button>
      <button aria-label="Start" className="flex w-20 justify-center"><WindowsIcon /></button>
      <label className="ml-2.5 flex h-16 w-[438px] items-center rounded-full border-2 border-[#c6cfe2] bg-[#f5f8fe] pl-5 pr-1">
        <svg viewBox="0 0 32 32" className="size-8" fill="none" stroke="#26282b" strokeWidth="3" strokeLinecap="round" aria-hidden="true"><circle cx="15" cy="13" r="11" /><path d="M23 21.500l6 7.500" /></svg>
        <input aria-label="Search" placeholder="Search" className="ml-5 min-w-0 flex-1 text-[26px] outline-none placeholder:text-[#5a5c60]" />
        <BearArt />
      </label>
      <div className="ml-1.5 flex h-[92px] items-center">
        {apps.map(([name, icon, open]) => (
          <button key={name} aria-label={name} className="relative flex h-full w-[88px] items-center justify-center">
            {name === "Edge" && <span className="absolute inset-x-1.5 bottom-2 top-2 rounded-lg border border-white/60 bg-[#ebf0fa] shadow-sm" />}
            <span className="relative">{icon}</span>
            {open && <span className="absolute bottom-2 h-1.5 w-3 rounded-full bg-[#80868f]" />}
            {name === "Edge" && <span className="absolute bottom-2 h-1.5 w-8 rounded-full bg-[#0a78d4]" />}
          </button>
        ))}
      </div>
      <div className="ml-auto flex items-center">
        <button aria-label="Show hidden icons" className="mr-[34px]"><svg viewBox="0 0 28 28" className="size-7" fill="none" stroke="currentColor" strokeWidth="2.500" aria-hidden="true"><path d="M4 19l10-10 10 10" /></svg></button>
        <button aria-label="OneDrive" className="mr-8">
          <svg viewBox="0 0 34 34" className="size-[34px]" aria-hidden="true"><path d="M8 25a6.500 6.500 0 0 1-1-12.500A8 8 0 0 1 12 9a8.500 8.500 0 0 1 14 3" fill="#9b9b9b" stroke="#1a1a1a" strokeWidth="2" /><path d="M8 25a6 6 0 0 1 0-8l9-3 6 6-6 5z" fill="#d8d8d8" /><path d="M12 25H8a6.500 6.500 0 0 1-4-11" fill="none" stroke="#1a1a1a" strokeWidth="2" /><circle cx="25" cy="24" r="9" fill="#f9e300" /><path d="M25 18.500v6.500M25 27.500v2" stroke="#111" strokeWidth="2" /></svg>
        </button>
        <button aria-label="Wi-Fi" className="mr-4"><svg viewBox="0 0 34 28" className="h-7 w-[34px]" fill="none" stroke="currentColor" strokeWidth="2.200" aria-hidden="true"><path d="M1.500 12.500a21.500 21.500 0 0 1 31 0M6.500 16.500a15 15 0 0 1 21 0M11 20.500a8.500 8.500 0 0 1 12 0" /><circle cx="17" cy="24" r="2.600" fill="currentColor" stroke="none" /></svg></button>
        <button aria-label="Volume" className="mr-4"><svg viewBox="0 0 32 30" className="h-[30px] w-8" fill="none" stroke="currentColor" strokeWidth="2" strokeLinejoin="round" aria-hidden="true"><path d="M2 11h5l7-7v23l-7-7H2zM18 11c2 2.500 2 6 0 8.500M22.500 7.500c4 5 4 10.500 0 15.500" /><path d="M26.500 2.500c6 8 6 17 0 25" stroke="#b2bac3" /></svg></button>
        <button aria-label="Battery" className="mr-[34px]"><svg viewBox="0 0 34 24" className="h-6 w-[34px]" aria-hidden="true"><rect x="1.500" y="2.500" width="27" height="19" rx="4" fill="none" stroke="currentColor" strokeWidth="2" /><rect x="5" y="6" width="18" height="12" rx="1.500" fill="currentColor" /><path d="M29 9h2.500a1.500 1.500 0 0 1 1.500 1.500v3a1.500 1.500 0 0 1-1.500 1.500H29z" fill="currentColor" /></svg></button>
        <button className="text-right text-[23px] leading-[34px]">09.29<br />27/02/2024</button>
        <button aria-label="Notifications" className="ml-[18px] mr-[43px]"><svg viewBox="0 0 26 32" className="h-8 w-[26px]" fill="#033c96" aria-hidden="true"><path d="M13 0a10 10 0 0 1 10 10v9l3 5v1H0v-1l3-5v-9A10 10 0 0 1 13 0zM8 27h10a5 5 0 0 1-10 0z" /></svg></button>
      </div>
    </footer>
  );
}

export default function App() {
  return (
    <div className="flex h-screen flex-col overflow-hidden bg-[#f7f7f7] font-['Noto_Sans',sans-serif]">
      <TabStrip />
      <Toolbar />
      <div className="flex min-h-0 flex-1">
        <div className="flex min-w-0 flex-1 flex-col">
          <Bookmarks />
          <Page />
        </div>
        <EdgeSidebar />
      </div>
      <Taskbar />
    </div>
  );
}
